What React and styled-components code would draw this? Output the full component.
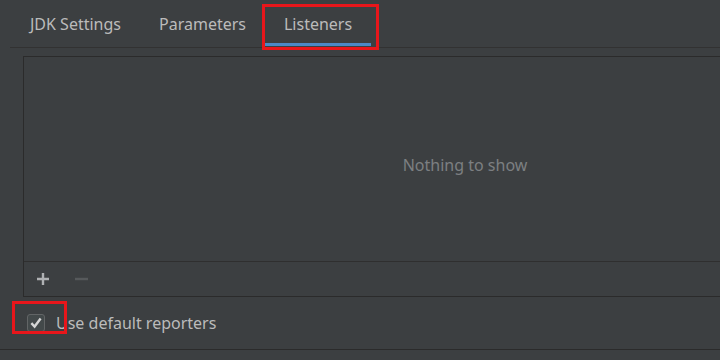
import styled, { createGlobalStyle } from 'styled-components'

const Global = createGlobalStyle`
	body {
		margin: 0;
		background: #3c3f41;
	}
	#root {
		width: 720px;
		height: 360px;
		overflow: hidden;
	}
`

const Page = styled.div`
	position: relative;
	width: 720px;
	height: 360px;
	background: #3c3f41;
	font-family: 'Noto Sans', 'Open Sans', sans-serif;
	font-size: 16px;
	color: #bbbbbb;
	display: flex;
	flex-direction: column;
`

const TabBar = styled.div`
	display: flex;
	height: 47px;
	margin-left: 10px;
	padding-left: 1px;
	border-bottom: 1px solid #323232;
`

const Tab = styled.div`
	position: relative;
	display: flex;
	align-items: center;
	padding: 0 19px;
	color: #bbbbbb;
	&::after {
		content: '';
		position: absolute;
		left: 0;
		right: 0;
		bottom: 1px;
		height: 3px;
		background: ${(p) => (p.$active ? '#4a88c7' : 'transparent')};
	}
`

// red annotation frames drawn over the screenshot
const Highlight = styled.div`
	position: absolute;
	border: 3px solid #e8161b;
	pointer-events: none;
`

const Panel = styled.div`
	margin: 8px 0 0 23px;
	width: 882px;
	flex: none;
	border: 1px solid #2b2b2b;
	display: flex;
	flex-direction: column;
`

const Empty = styled.div`
	height: 204px;
	box-sizing: border-box;
	padding-top: 12px;
	display: flex;
	align-items: center;
	justify-content: center;
	color: #7c7f82;
`

const Toolbar = styled.div`
	height: 34px;
	border-top: 1px solid #2f2f2f;
	display: flex;
	align-items: center;
	padding-left: 11px;
	gap: 22px;
`

const ToolButton = styled.svg`
	width: 16px;
	height: 16px;
	display: block;
`

const CheckRow = styled.div`
	position: relative;
	height: 52px;
	border-bottom: 1px solid #2b2b2b;
	display: flex;
	align-items: center;
	padding-left: 27px;
	gap: 11px;
	flex: none;
`

const Box = styled.span`
	width: 18px;
	height: 18px;
	box-sizing: border-box;
	border: 1px solid #626566;
	border-radius: 3px;
	background: #43494a;
	display: flex;
	align-items: center;
	justify-content: center;
`

function Plus() {
	return (
		<ToolButton viewBox="0 0 16 16">
			<path d="M8 2v12M2 8h12" stroke="#afb1b3" strokeWidth="2.4" />
		</ToolButton>
	)
}

function Minus() {
	return (
		<ToolButton viewBox="0 0 16 16">
			<path d="M2 8h13" stroke="#56595b" strokeWidth="2.4" />
		</ToolButton>
	)
}

export default function App() {
	return (
		<Page>
			<Global />
			<TabBar>
				<Tab>JDK Settings</Tab>
				<Tab>Parameters</Tab>
				<Tab $active>
					Listeners
					<Highlight style={{ left: -3, right: -8, top: 4, height: 40 }} />
				</Tab>
			</TabBar>
			<Panel>
				<Empty>Nothing to show</Empty>
				<Toolbar>
					<Plus />
					<Minus />
				</Toolbar>
			</Panel>
			<CheckRow>
				<Box>
					<svg width="14" height="14" viewBox="0 0 13 13">
						<path d="M2.2 6.6l3 3.2L10.8 2.4" fill="none" stroke="#d6d6d6" strokeWidth="2.2" />
					</svg>
				</Box>
				<span>Use default reporters</span>
				<Highlight style={{ left: 12, top: 4, width: 49, height: 27 }} />
			</CheckRow>
		</Page>
	)
}
